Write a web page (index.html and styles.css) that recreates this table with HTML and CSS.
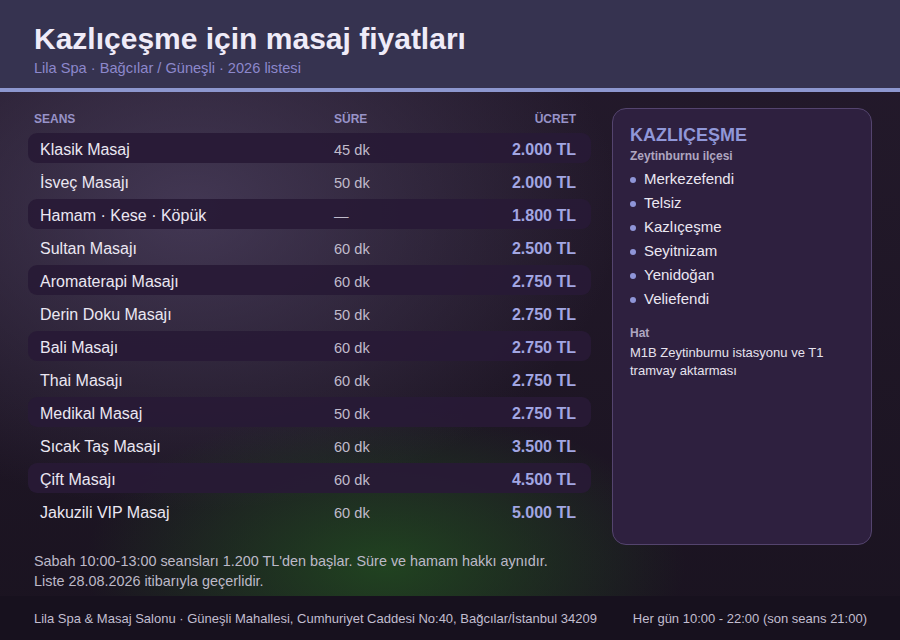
FILE: index.html
```html
<!DOCTYPE html>
<html lang="tr">
<head>
<meta charset="utf-8">
<title>Kazlıçeşme için masaj fiyatları</title>
<link rel="stylesheet" href="styles.css">
</head>
<body>
<div class="page">
  <header class="top">
    <h1 class="title">Kazlıçeşme için masaj fiyatları</h1>
    <p class="subtitle">Lila Spa · Bağcılar / Güneşli · 2026 listesi</p>
  </header>
  <main class="main">
    <section class="left">
      <div class="thead">
        <span class="c-name">SEANS</span>
        <span class="c-dur">SÜRE</span>
        <span class="c-price">ÜCRET</span>
      </div>
      <div class="row alt"><span class="c-name">Klasik Masaj</span><span class="c-dur">45 dk</span><span class="c-price">2.000 TL</span></div>
      <div class="row"><span class="c-name">İsveç Masajı</span><span class="c-dur">50 dk</span><span class="c-price">2.000 TL</span></div>
      <div class="row alt"><span class="c-name">Hamam · Kese · Köpük</span><span class="c-dur">—</span><span class="c-price">1.800 TL</span></div>
      <div class="row"><span class="c-name">Sultan Masajı</span><span class="c-dur">60 dk</span><span class="c-price">2.500 TL</span></div>
      <div class="row alt"><span class="c-name">Aromaterapi Masajı</span><span class="c-dur">60 dk</span><span class="c-price">2.750 TL</span></div>
      <div class="row"><span class="c-name">Derin Doku Masajı</span><span class="c-dur">50 dk</span><span class="c-price">2.750 TL</span></div>
      <div class="row alt"><span class="c-name">Bali Masajı</span><span class="c-dur">60 dk</span><span class="c-price">2.750 TL</span></div>
      <div class="row"><span class="c-name">Thai Masajı</span><span class="c-dur">60 dk</span><span class="c-price">2.750 TL</span></div>
      <div class="row alt"><span class="c-name">Medikal Masaj</span><span class="c-dur">50 dk</span><span class="c-price">2.750 TL</span></div>
      <div class="row"><span class="c-name">Sıcak Taş Masajı</span><span class="c-dur">60 dk</span><span class="c-price">3.500 TL</span></div>
      <div class="row alt"><span class="c-name">Çift Masajı</span><span class="c-dur">60 dk</span><span class="c-price">4.500 TL</span></div>
      <div class="row"><span class="c-name">Jakuzili VIP Masaj</span><span class="c-dur">60 dk</span><span class="c-price">5.000 TL</span></div>
      <p class="notes">Sabah 10:00-13:00 seansları 1.200 TL'den başlar. Süre ve hamam hakkı aynıdır.<br>Liste 28.08.2026 itibarıyla geçerlidir.</p>
    </section>
    <aside class="side">
      <h2 class="side-title">KAZLIÇEŞME</h2>
      <p class="side-sub">Zeytinburnu ilçesi</p>
      <ul class="hoods">
        <li>Merkezefendi</li>
        <li>Telsiz</li>
        <li>Kazlıçeşme</li>
        <li>Seyitnizam</li>
        <li>Yenidoğan</li>
        <li>Veliefendi</li>
      </ul>
      <p class="side-label">Hat</p>
      <p class="side-text">M1B Zeytinburnu istasyonu ve T1 tramvay aktarması</p>
    </aside>
  </main>
  <footer class="foot">
    <span>Lila Spa &amp; Masaj Salonu · Güneşli Mahallesi, Cumhuriyet Caddesi No:40, Bağcılar/İstanbul 34209</span>
    <span>Her gün 10:00 - 22:00 (son seans 21:00)</span>
  </footer>
</div>
</body>
</html>
```
FILE: styles.css
```css
* { box-sizing: border-box; }
html, body { margin: 0; padding: 0; }
body {
  font-family: "Liberation Sans", Arial, sans-serif;
  background: #1a1320;
}
.page {
  width: 900px;
  height: 640px;
  display: flex;
  flex-direction: column;
  overflow: hidden;
  background:
    radial-gradient(ellipse 300px 160px at 385px 565px, rgba(34, 80, 32, 0.78), rgba(34, 80, 32, 0) 100%),
    radial-gradient(ellipse 430px 300px at 190px 210px, rgba(78, 66, 98, 0.75), rgba(78, 66, 98, 0) 100%),
    linear-gradient(180deg, #241a2c 0%, #1a1320 100%);
}
.top {
  height: 92px;
  flex: none;
  background: #363350;
  border-bottom: 4px solid #8d97cf;
  padding: 22px 34px 0;
}
.title {
  margin: 0 0 2px;
  font-size: 30px;
  line-height: 34px;
  font-weight: 700;
  color: #efebf8;
}
.subtitle {
  margin: 0;
  font-size: 14.6px;
  line-height: 20px;
  color: #8d88cc;
}
.main {
  flex: 1;
  display: grid;
  grid-template-columns: 563px 260px;
  column-gap: 21px;
  padding: 16px 28px 0;
  align-items: start;
}
.thead {
  display: flex;
  align-items: center;
  padding: 3px 15px 6px 6px;
  line-height: 16px;
  font-size: 12px;
  font-weight: 700;
  color: #9893c8;
}
.thead .c-name { width: 300px; }
.row {
  display: flex;
  align-items: center;
  height: 30px;
  margin-bottom: 3px;
  padding: 3px 15px 0 12px;
  border-radius: 9px;
}
.row.alt { background: rgba(40, 26, 54, 0.93); }
.c-name { width: 294px; flex: none; }
.c-dur { flex: 1; }
.c-price { text-align: right; }
.row .c-name { font-size: 16px; color: #ebe7f2; }
.row .c-dur { font-size: 14.6px; color: #c0bbcb; }
.row .c-price { font-size: 16px; font-weight: 700; color: #a2a6e2; }
.notes {
  margin: 0;
  padding: 22px 0 0 6px;
  font-size: 14.4px;
  line-height: 20px;
  color: #bdb9c8;
}
.side {
  height: 437px;
  background: #2e203f;
  border: 1px solid #54446e;
  border-radius: 14px;
  padding: 15px 17px;
}
.side-title {
  margin: 0;
  font-size: 18px;
  line-height: 22px;
  font-weight: 700;
  color: #9097d8;
}
.side-sub {
  margin: 2px 0 3px;
  font-size: 12px;
  line-height: 16px;
  font-weight: 700;
  color: #aea6c0;
}
.hoods {
  list-style: none;
  margin: 0;
  padding: 0;
}
.hoods li {
  display: flex;
  align-items: center;
  gap: 8px;
  font-size: 15px;
  line-height: 24px;
  color: #ebe7f2;
}
.hoods li::before {
  content: "";
  width: 6px;
  height: 6px;
  border-radius: 50%;
  background: #8f95d8;
  flex: none;
  margin-top: 1px;
}
.side-label {
  margin: 14px 0 3px;
  font-size: 12px;
  line-height: 16px;
  font-weight: 700;
  color: #aea6c0;
}
.side-text {
  margin: 0;
  font-size: 13px;
  line-height: 18px;
  color: #e6e2ee;
}
.foot {
  height: 44px;
  flex: none;
  background: #17111e;
  display: flex;
  align-items: center;
  justify-content: space-between;
  padding: 0 33px 0 34px;
  font-size: 13px;
  color: #c2bed0;
}
```
